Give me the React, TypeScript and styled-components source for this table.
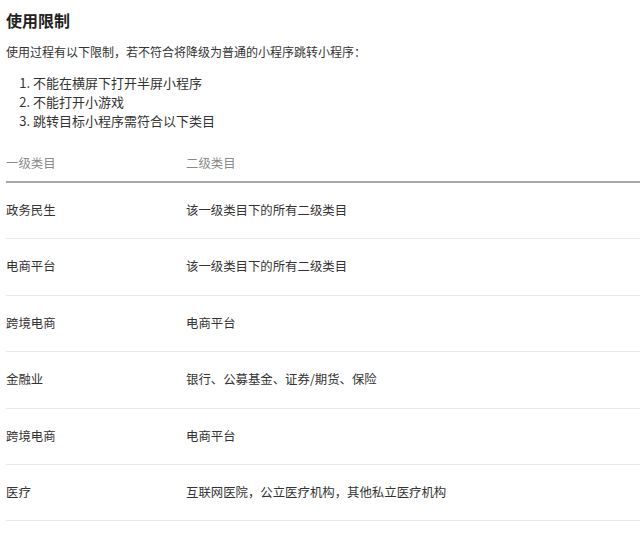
import React from "react";
import styled, { createGlobalStyle } from "styled-components";

const GlobalStyle = createGlobalStyle`
  html, body {
    margin: 0;
    padding: 0;
    background: #ffffff;
  }
  body {
    font-family: "Noto Sans CJK SC", "Noto Sans", sans-serif;
    color: #333333;
    overflow: hidden;
    text-spacing-trim: space-all;
  }
`;

const Page = styled.div`
  padding: 0 0 0 6px;
`;

const Title = styled.h3`
  font-size: 16px;
  font-weight: 700;
  color: #222222;
  line-height: 22px;
  margin: 9px 0 0;
`;

const Intro = styled.p`
  font-size: 12px;
  line-height: 20px;
  margin: 11px 0 0;
`;

const Rules = styled.ol`
  font-size: 13px;
  line-height: 19px;
  margin: 10.5px 0 0;
  padding-left: 27px;
`;

const Table = styled.table`
  width: 100%;
  border-collapse: collapse;
  margin-top: 15.5px;
  font-size: 12.4px;
`;

const HeadCell = styled.th<{ $wide?: boolean }>`
  text-align: left;
  font-weight: 400;
  color: #8a8a8a;
  line-height: 20px;
  padding: 8px 0;
  width: ${(p) => (p.$wide ? "auto" : "180px")};
  border-bottom: 2px solid #a8a8a8;
`;

const Cell = styled.td`
  line-height: 19.4px;
  padding: 18px 0;
  color: #333333;
  border-bottom: 1px solid #e8e8e8;
`;

const rows: [string, string][] = [
  ["政务民生", "该一级类目下的所有二级类目"],
  ["电商平台", "该一级类目下的所有二级类目"],
  ["跨境电商", "电商平台"],
  ["金融业", "银行、公募基金、证券/期货、保险"],
  ["跨境电商", "电商平台"],
  ["医疗", "互联网医院，公立医疗机构，其他私立医疗机构"],
];

export default function App() {
  return (
    <Page>
      <GlobalStyle />
      <Title>使用限制</Title>
      <Intro>使用过程有以下限制，若不符合将降级为普通的小程序跳转小程序：</Intro>
      <Rules>
        <li>不能在横屏下打开半屏小程序</li>
        <li>不能打开小游戏</li>
        <li>跳转目标小程序需符合以下类目</li>
      </Rules>
      <Table>
        <thead>
          <tr>
            <HeadCell>一级类目</HeadCell>
            <HeadCell $wide>二级类目</HeadCell>
          </tr>
        </thead>
        <tbody>
          {rows.map(([a, b], i) => (
            <tr key={i}>
              <Cell>{a}</Cell>
              <Cell>{b}</Cell>
            </tr>
          ))}
        </tbody>
      </Table>
    </Page>
  );
}
